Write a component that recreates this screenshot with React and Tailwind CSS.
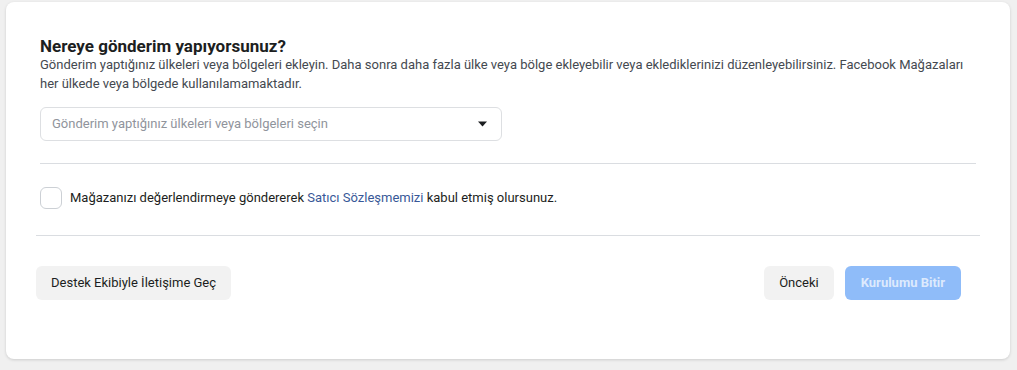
import React from 'react';

export default function App() {
  return (
    <div className="w-[1017px] h-[370px] bg-[#f0f0f0] pt-[2px] pl-[6px] font-['Roboto',sans-serif] text-[#1c1e21]">
      <div className="w-[1004px] h-[357px] bg-white rounded-lg shadow-[0_1px_3px_rgba(0,0,0,0.15)] px-[30px] pt-[34px]">
        {/* Country section */}
        <div className="px-[4px]">
          <h2 className="text-[17px] leading-[20px] font-bold">Nereye gönderim yapıyorsunuz?</h2>
          <p className="text-[13px] leading-[19px] text-[#444950] mt-[-1px]">
            Gönderim yaptığınız ülkeleri veya bölgeleri ekleyin. Daha sonra daha fazla ülke veya bölge ekleyebilir veya eklediklerinizi düzenleyebilirsiniz. Facebook Mağazaları her ülkede veya bölgede kullanılamamaktadır.
          </p>
          <div className="mt-[14px] w-[462px] h-[34px] border border-[#dddfe2] rounded-md flex items-center justify-between pl-[11px] pr-[14px]">
            <span className="text-[13px] text-[#90949c]">Gönderim yaptığınız ülkeleri veya bölgeleri seçin</span>
            <svg width="9" height="6" viewBox="0 0 9 6">
              <path d="M0 0.5 H9 L4.5 5.5 Z" fill="#1c1e21" />
            </svg>
          </div>
          <div className="mt-[22px] border-t border-[#dadde1]" />
          <label className="mt-[23px] flex items-center gap-[8px]">
            <span className="w-[22px] h-[22px] border border-[#ccd0d5] rounded-md bg-white" />
            <span className="text-[13px] text-[#1c1e21]">
              Mağazanızı değerlendirmeye göndererek <span className="text-[#385898]">Satıcı Sözleşmemizi</span> kabul etmiş olursunuz.
            </span>
          </label>
        </div>
        <div className="mt-[26px] border-t border-[#dadde1]" />
        {/* Footer */}
        <div className="mt-[30px] flex items-center justify-between pr-[19px]">
          <button className="h-[34px] px-[15px] rounded-md bg-[#f2f2f2] text-[13px] text-[#1c1e21]">
            Destek Ekibiyle İletişime Geç
          </button>
          <div className="flex items-center gap-[11px]">
            <button className="h-[34px] px-[15px] rounded-md bg-[#f2f2f2] text-[13px] text-[#1c1e21]">
              Önceki
            </button>
            <button className="h-[34px] px-[16px] rounded-md bg-[#8fbcf9] text-[13px] font-bold text-white/70">
              Kurulumu Bitir
            </button>
          </div>
        </div>
      </div>
    </div>
  );
}
